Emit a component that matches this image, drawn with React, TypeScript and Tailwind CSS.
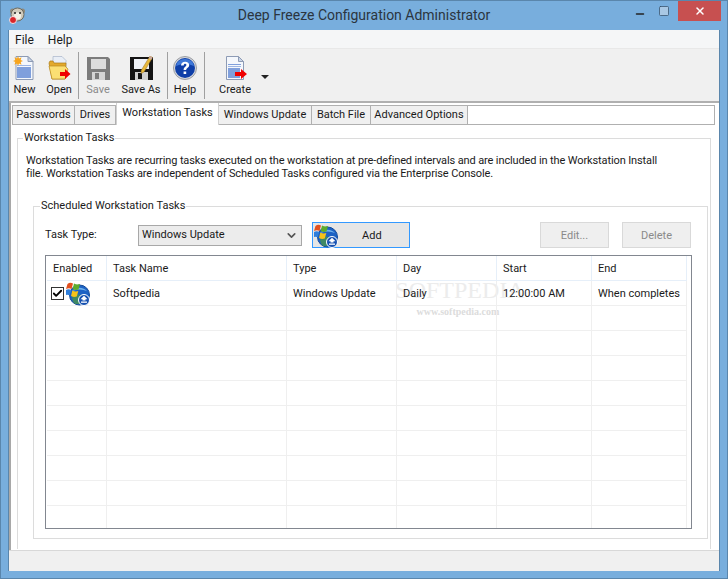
import type { ReactNode } from 'react';
import { Check, ChevronDown, Minus, Square, X } from 'lucide-react';

const PageIcon = ({ children, x = 2.5 }: { children?: ReactNode; x?: number }) => (
  <svg width="24" height="24" viewBox="0 0 24 24">
    <g transform={`translate(${x} 0)`}>
      <path d="M.5 .5h12l5 5v18H.5z" fill="#f4f7fc" stroke="#8d9bb5" />
      <path d="M12.500 .5v5h5z" fill="#c9d4e6" stroke="#8d9bb5" />
    </g>
    {children}
  </svg>
);

const NewIcon = () => (
  <PageIcon>
    <rect x="4" y="11" width="14" height="11" fill="#7f9fdc" />
    <rect x="4" y="9" width="14" height="1" fill="#9db5e3" />
    <path
      d="M5 0l1 2.500 2.500-1.200-.8 2.700L10 5l-2.300 1 .8 2.700L6 7.500 5 10 4 7.500 1.500 8.700 2.300 6 0 5l2.300-1-.8-2.700L4 2.500z"
      fill="#f7a51e"
    />
  </PageIcon>
);

const CreateIcon = () => (
  <PageIcon x={3}>
    <rect x="5" y="12" width="12" height="10" fill="#7f9fdc" />
    <rect x="5" y="8" width="13" height="1" fill="#7f9fdc" />
    <rect x="5" y="10" width="13" height="1" fill="#9db5e3" />
    <path d="M12 16h6v-3l6 5-6 5v-3h-6z" fill="#f00000" />
  </PageIcon>
);

const OpenIcon = () => (
  <svg width="24" height="24" viewBox="0 0 24 24">
    <path d="M6 .5h9l4 4v10H6z" fill="#e9eef6" stroke="#a8b4c8" strokeWidth="0.7" />
    <path d="M2 7l1-2h3l1 2h12l-1 16H5z" fill="#e3a92b" stroke="#a97a17" strokeWidth="0.7" />
    <path d="M5 23L2 10h16l3 3-3 10z" fill="#fbdf73" stroke="#b98a1f" strokeWidth="0.7" />
    <path d="M13 16h5v-3l5.500 5-5.500 5v-3h-5z" fill="#f00000" />
  </svg>
);

const SaveIcon = () => (
  <svg width="23" height="24" viewBox="0 0 23 24">
    <path d="M0 1h21l2 2v21H0z" fill="#7c7c7c" />
    <rect x="4" y="3" width="15" height="10" fill="#dcdcdc" />
    <rect x="5" y="16" width="13" height="8" fill="#d4d4d4" />
    <rect x="8" y="17" width="4" height="6" fill="#7c7c7c" />
  </svg>
);

const SaveAsIcon = () => (
  <svg width="23" height="24" viewBox="0 0 23 24">
    <path d="M0 1h23v23H0z" fill="#141414" />
    <rect x="4" y="3" width="15" height="10" fill="#eef1f6" />
    <rect x="5" y="16" width="13" height="8" fill="#cfcfcf" />
    <rect x="8" y="17" width="4" height="6" fill="#141414" />
    <path d="M20 0l2.500 1.500L14 16l-3 1.500.3-3.300z" fill="#e8b93c" stroke="#94702a" strokeWidth="0.5" />
    <path d="M20 0l2.500 1.500-1.200 2.200-2.500-1.500z" fill="#c9a8a0" />
  </svg>
);

const HelpIcon = () => (
  <svg width="24" height="24" viewBox="0 0 24 24">
    <circle cx="12" cy="12" r="11.500" fill="#d6d8dc" stroke="#9a9da3" />
    <circle cx="12" cy="12" r="10" fill="#0f3fa8" />
    <path d="M3 10a9 7 0 0 1 18 0q-9-4-18 0z" fill="#3f78d8" />
    <path
      d="M8 9.500c0-2.500 1.800-3.800 4.200-3.800 2.400 0 4 1.300 4 3.300 0 2.800-3 2.700-3 5h-2.600c0-3.400 2.800-3.200 2.800-5 0-.7-.5-1.200-1.300-1.200-.9 0-1.400.6-1.400 1.700zM10.600 15.500h2.600v2.500h-2.600z"
      fill="#fff"
    />
  </svg>
);

const UpdateIcon = () => (
  <svg width="24" height="25" viewBox="0 0 24 25" className="shrink-0">
    <circle cx="13.500" cy="14" r="10" fill="#1c62c4" stroke="#124a9a" />
    <path d="M6 10a9 7 0 0 1 15 0q-7-3-15 0z" fill="#6fb2ec" />
    <path d="M9 23q-5-5-1-10l7 1q3 4 0 9z" fill="#4f9a3c" opacity="0.7" />
    <path d="M1.500 3q2.500-2 5.500-.5L5.500 8Q3 6.500 0 8z" fill="#e2501f" />
    <path d="M8 2.500q3 1.500 6 .5l-1.500 5.500q-3 1-5.800-.5z" fill="#5cab2c" />
    <path d="M0 9q2.500-1.500 5.200 0L3.800 14.500q-2.300-1.500-5.300 0z" fill="#2f7fdc" />
    <path d="M6.300 9.500q3 1.500 6 .5l-1.500 5.500q-3 1-5.800-.5z" fill="#f5c21a" />
    <circle cx="18" cy="19" r="5.500" fill="#1450b0" stroke="#fff" strokeWidth="1" />
    <path d="M18 14.800l3.500 3.500h-2v1.200h-3v-1.200h-2z" fill="#fff" />
    <rect x="15" y="20.500" width="6" height="1.300" fill="#fff" />
  </svg>
);

const AppIcon = () => (
  <svg width="17" height="17" viewBox="0 0 17 17">
    <circle cx="3.500" cy="4" r="2.500" fill="#8f8a7c" />
    <circle cx="13.500" cy="4" r="2.500" fill="#8f8a7c" />
    <circle cx="8.500" cy="7.500" r="6.500" fill="#cfcabb" stroke="#6e6a5e" />
    <circle cx="8.500" cy="9" r="3.500" fill="#f4f1e6" />
    <circle cx="6" cy="6" r="1" fill="#222" />
    <circle cx="11" cy="6" r="1" fill="#222" />
    <circle cx="4" cy="13" r="3.500" fill="#d9252b" stroke="#fff" strokeWidth="0.8" />
  </svg>
);

const ToolButton = ({
  label,
  width,
  icon,
  disabled,
}: {
  label: string;
  width: string;
  icon: ReactNode;
  disabled?: boolean;
}) => (
  <div className={`flex h-[50px] flex-col items-center ${width}`}>
    <div className="flex h-[30px] items-end justify-center">{icon}</div>
    <span className={`mt-[2px] whitespace-nowrap leading-[16px] ${disabled ? 'text-[#8a8a8a]' : ''}`}>{label}</span>
  </div>
);

const Separator = () => <div className="mr-[2px] h-[47px] w-[1px] bg-[#a0a0a0]" />;

const tabs = [
  { label: 'Passwords', width: 'w-[63px]' },
  { label: 'Drives', width: 'w-[41px]' },
  { label: 'Workstation Tasks', width: 'w-[103px]', active: true },
  { label: 'Windows Update', width: 'w-[93px]' },
  { label: 'Batch File', width: 'w-[59px]' },
  { label: 'Advanced Options', width: 'w-[97px]' },
];

const columns = ['Enabled', 'Task Name', 'Type', 'Day', 'Start', 'End'];
const gridCols = 'grid grid-cols-[60px_180px_110px_100px_95px_95px]';
const cell = 'flex h-[25px] items-center whitespace-nowrap border-b border-r border-[#efefef] pl-[6px] pt-[3px]';

export default function App() {
  return (
    <div className="flex h-[579px] w-[728px] flex-col overflow-hidden border border-[#5a86ac] bg-[#78aedd] font-['Roboto','Liberation_Sans',sans-serif] text-[11px] text-[#1a1a1a]">
      {/* Title bar */}
      <div className="relative flex h-[29px] shrink-0 items-center justify-center">
        <div className="absolute left-[8px] top-[6px]">
          <AppIcon />
        </div>
        <span className="text-[14px] text-[#2b3540]">Deep Freeze Configuration Administrator</span>
        <div className="absolute right-[6px] top-0 flex items-start">
          <Minus size={12} strokeWidth={3} color="#222" className="mr-[12px] mt-[7px]" />
          <Square size={12} strokeWidth={1.500} color="#35506b" fill="#a9c8e4" className="mr-[8px] mt-[4px]" />
          <div className="flex h-[20px] w-[43px] items-center justify-center bg-[#c75050]">
            <X size={12} strokeWidth={3} color="#fff" />
          </div>
        </div>
      </div>

      {/* Client area */}
      <div className="mx-[7px] flex h-[541px] shrink-0 flex-col border-x border-[#5a86ac] bg-white">
        {/* Menu */}
        <div className="flex h-[19px] shrink-0 items-center gap-[14px] border-b border-[#e8e8e8] bg-[#f5f6f7] pl-[6px] pt-[2px] text-[12px]">
          <span>File</span>
          <span>Help</span>
        </div>

        {/* Toolbar */}
        <div className="flex h-[54px] shrink-0 items-center border-b-2 border-[#b0b0b0] bg-[#f0f0f0]">
          <ToolButton label="New" width="w-[31px]" icon={<NewIcon />} />
          <ToolButton label="Open" width="w-[38px]" icon={<OpenIcon />} />
          <Separator />
          <ToolButton label="Save" width="w-[34px]" icon={<SaveIcon />} disabled />
          <ToolButton label="Save As" width="w-[52px]" icon={<SaveAsIcon />} />
          <Separator />
          <ToolButton label="Help" width="w-[30px] mr-[4px]" icon={<HelpIcon />} />
          <Separator />
          <ToolButton label="Create" width="w-[56px]" icon={<CreateIcon />} />
          <div className="ml-[-2px] mt-[3px] h-0 w-0 border-x-[4px] border-t-[4px] border-x-transparent border-t-[#222]" />
        </div>

        {/* Tabs */}
        <div className="flex min-h-0 flex-1">
          <div className="w-[2px] shrink-0 bg-[#a8a8a8]" />
          <div className="flex min-w-0 flex-1 flex-col">
            <div className="flex h-[22px] shrink-0 items-end pl-[1px]">
              {tabs.map(tab => (
                <div
                  key={tab.label}
                  className={
                    tab.active
                      ? `flex h-[22px] items-center justify-center whitespace-nowrap border-x border-[#d0d0d0] bg-white pb-[2px] ${tab.width}`
                      : `flex h-[20px] items-center justify-center whitespace-nowrap border-y border-r border-[#b0b0b0] bg-[#f0f0f0] first:border-l ${tab.width}`
                  }
                >
                  {tab.label}
                </div>
              ))}
              <div className="mr-[4px] h-[20px] flex-1 border-y border-r border-[#b0b0b0] bg-white" />
            </div>

            {/* Workstation Tasks page */}
            <div className="flex min-h-0 flex-1 flex-col pb-[1px] pl-[6px] pr-[10px] pt-[6px]">
              <fieldset className="min-h-0 flex-1 border border-b-0 border-[#dcdcdc] pl-[8px] pr-[9px]">
                <legend className="-ml-[3px] px-[1px] leading-[14px]">Workstation Tasks</legend>
                <p className="mt-[9px] whitespace-nowrap text-[11px] leading-[13px] tracking-[-0.12px]">
                  Workstation Tasks are recurring tasks executed on the workstation at pre-defined intervals and are included in the Workstation Install
                  <br />
                  file. Workstation Tasks are independent of Scheduled Tasks configured via the Enterprise Console.
                </p>

                <fieldset className="-mr-[7px] ml-[7px] mt-[19px] h-[340px] border border-[#dcdcdc] pl-[11px] pr-[15px] pt-[9px]">
                  <legend className="-ml-[5px] px-[1px] leading-[14px]">Scheduled Workstation Tasks</legend>

                  <div className="flex h-[26px] items-center">
                    <span className="w-[93px] pt-[1px]">Task Type:</span>
                    <div className="flex h-[21px] w-[164px] items-center justify-between border border-[#a8a8a8] bg-[#ececec] pl-[3px] pr-[3px] pt-[1px]">
                      <span>Windows Update</span>
                      <ChevronDown size={13} strokeWidth={3} color="#555" />
                    </div>
                    <button className="ml-[10px] flex h-[26px] w-[98px] items-center border border-[#3399ff] bg-[#e6e6e6] pl-[1px]">
                      <UpdateIcon />
                      <span className="ml-[24px] pt-[2px]">Add</span>
                    </button>
                    <button className="ml-auto h-[26px] w-[69px] border border-[#d9d9d9] bg-[#efefef] pt-[2px] text-[#8a8a8a]">Edit...</button>
                    <button className="ml-[13px] mr-[1px] h-[26px] w-[69px] border border-[#d9d9d9] bg-[#efefef] pt-[2px] text-[#8a8a8a]">Delete</button>
                  </div>

                  {/* Task table */}
                  <div className="relative isolate mt-[7px] h-[274px] w-[647px] overflow-hidden border border-[#828790] pl-[1px]">
                    <div className={gridCols}>
                      {columns.map(col => (
                        <div key={col} className="flex h-[25px] items-center border-b border-r border-[#e6eff9] pl-[6px] pt-[2px]">
                          {col}
                        </div>
                      ))}
                    </div>
                    <div className={gridCols}>
                      <div className={`${cell} !pl-[4px] !pt-0`}>
                        <div className="flex h-[13px] w-[13px] shrink-0 items-center justify-center border border-[#333] bg-white">
                          <Check size={11} strokeWidth={4} color="#000" />
                        </div>
                        <div className="ml-[2px] flex items-center">
                          <UpdateIcon />
                        </div>
                      </div>
                      <div className={cell}>Softpedia</div>
                      <div className={cell}>Windows Update</div>
                      <div className={cell}>Daily</div>
                      <div className={cell}>12:00:00 AM</div>
                      <div className={cell}>When completes</div>
                    </div>
                    {Array.from({ length: 9 }).map((_, row) => (
                      <div key={row} className={gridCols}>
                        {columns.map(col => (
                          <div key={col} className={`h-[25px] border-r border-[#efefef] ${row < 8 ? 'border-b' : ''}`} />
                        ))}
                      </div>
                    ))}

                    {/* Softpedia watermark, sits behind the rows */}
                    <div className="pointer-events-none absolute left-[349px] top-[22px] -z-10 flex w-[130px] flex-col items-center">
                      <span className="font-['Liberation_Serif',serif] text-[24px] leading-[24px] text-[#ececec]">SOFTPEDIA</span>
                      <span className="-ml-[4px] mt-[4px] font-['Liberation_Serif',serif] text-[10px] font-bold leading-[12px] text-[#dcdcdc]">www.softpedia.com</span>
                    </div>
                  </div>
                </fieldset>
              </fieldset>
            </div>
          </div>
        </div>

        {/* Status bar */}
        <div className="h-[21px] shrink-0 border-t border-[#d8d8d8] bg-[#f0f0f0]" />
      </div>
    </div>
  );
}
